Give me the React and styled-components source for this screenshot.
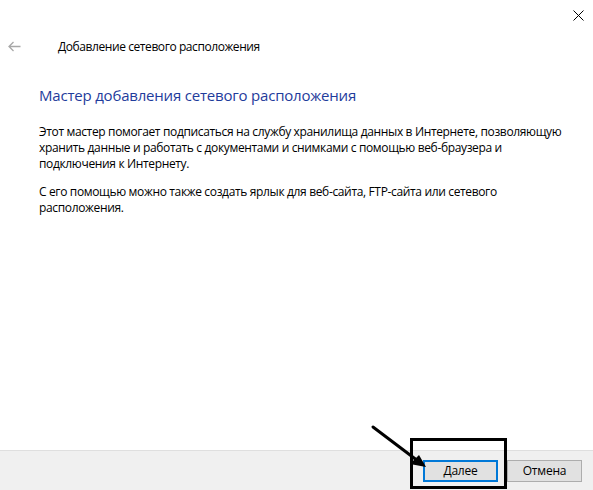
import React from "react";
import styled, { createGlobalStyle } from "styled-components";

const Global = createGlobalStyle`
  html, body { margin: 0; padding: 0; background: #fff; }
  body { font-family: "Open Sans", "Noto Sans", sans-serif; }
  * { box-sizing: border-box; }
`;

const Window = styled.div`
  width: 593px;
  height: 490px;
  display: flex;
  flex-direction: column;
  background: #fff;
  position: relative;
  overflow: hidden;
`;

const TitleBar = styled.div`
  height: 30px;
  display: flex;
  justify-content: flex-end;
  align-items: flex-start;
`;

const CloseButton = styled.div`
  width: 46px;
  height: 30px;
  display: flex;
  align-items: center;
  justify-content: center;
  margin-right: -8px;
`;

const NavRow = styled.div`
  display: flex;
  align-items: center;
  height: 32px;
  padding-left: 8px;
`;

const BackIcon = styled.div`
  width: 14px;
  display: flex;
  align-items: center;
`;

const NavTitle = styled.div`
  margin-left: 36px;
  font-size: 12px;
  color: #000;
  letter-spacing: -0.42px;
`;

const Content = styled.div`
  flex: 1;
  padding: 22px 20px 0 39px;
`;

const Heading = styled.h1`
  margin: 0;
  font-weight: 400;
  font-size: 15px;
  color: #1f3c9c;
  letter-spacing: -0.2px;
  line-height: 22px;
`;

const Para = styled.p`
  margin: ${(p) => (p.$first ? "18px" : "12px")} 0 0;
  font-size: 12px;
  line-height: 16px;
  color: #000;
  letter-spacing: -0.35px;
  white-space: nowrap;
`;

const Footer = styled.div`
  height: 40px;
  background: #f0f0f0;
  border-top: 1px solid #dfdfdf;
  display: flex;
  justify-content: flex-end;
  align-items: center;
  gap: 9px;
  padding-right: 11px;
`;

const Button = styled.div`
  width: 75px;
  height: 22px;
  display: flex;
  align-items: center;
  justify-content: center;
  font-size: 12px;
  color: #000;
  background: #e1e1e1;
  letter-spacing: -0.2px;
  border: ${(p) => (p.$default ? "2px solid #0078d7" : "1px solid #adadad")};
`;

const Highlight = styled.div`
  position: absolute;
  left: 410px;
  top: 438px;
  width: 97px;
  height: 51px;
  border: 3px solid #000;
  pointer-events: none;
`;

const Overlay = styled.svg`
  position: absolute;
  left: 0;
  top: 0;
  pointer-events: none;
`;

export default function App() {
  return (
    <>
      <Global />
      <Window>
        <TitleBar>
          <CloseButton>
            <svg width="11" height="11" viewBox="0 0 11 11">
              <path d="M0.5 0.5 L10.5 10.5 M10.5 0.5 L0.5 10.5" stroke="#000" strokeWidth="1" />
            </svg>
          </CloseButton>
        </TitleBar>
        <NavRow>
          <BackIcon>
            <svg width="13" height="11" viewBox="0 0 13 11">
              <path d="M1 5.5 H12.5 M5.5 1 L1 5.5 L5.5 10" stroke="#a8a8a8" strokeWidth="1.3" fill="none" />
            </svg>
          </BackIcon>
          <NavTitle>Добавление сетевого расположения</NavTitle>
        </NavRow>
        <Content>
          <Heading>Мастер добавления сетевого расположения</Heading>
          <Para $first>
            Этот мастер помогает подписаться на службу хранилища данных в Интернете, позволяющую
            <br />
            хранить данные и работать с документами и снимками с помощью веб-браузера и
            <br />
            подключения к Интернету.
          </Para>
          <Para>
            С его помощью можно также создать ярлык для веб-сайта, FTP-сайта или сетевого
            <br />
            расположения.
          </Para>
        </Content>
        <Footer>
          <Button $default>Далее</Button>
          <Button>Отмена</Button>
        </Footer>
        <Highlight />
        <Overlay width="593" height="490" viewBox="0 0 593 490">
          <path d="M373 427 L418 461" stroke="#000" strokeWidth="3" strokeLinecap="round" />
          <path d="M426 467 L410 464 L419 455 Z" fill="#000" />
        </Overlay>
      </Window>
    </>
  );
}
